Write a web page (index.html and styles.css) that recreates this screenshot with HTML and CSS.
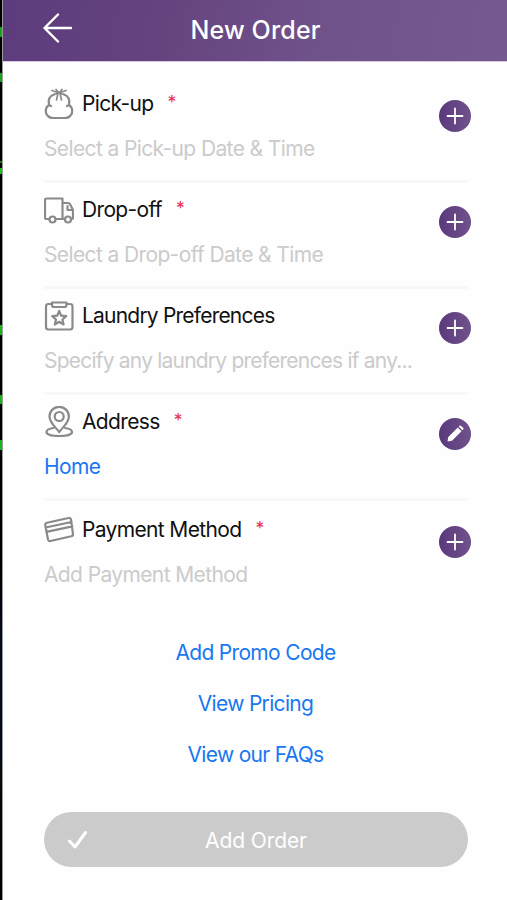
FILE: index.html
```html
<!DOCTYPE html>
<html lang="en">

<head>
    <meta charset="UTF-8">
    <meta name="viewport" content="width=device-width, initial-scale=1.0">
    <title>New Order</title>
    <link rel="stylesheet" href="styles.css">
</head>

<body>
    <div class="edge"></div>
    <div class="screen">
        <header class="header">
            <svg class="back" viewBox="0 0 30 30">
                <path d="M28 15H1.5M15 1.5L1.5 15L15 28.500" />
            </svg>
            <h1>New Order</h1>
        </header>

        <main class="content">
            <section class="row">
                <div class="info">
                    <h2>
                        <svg class="icon" viewBox="0 0 30 32">
                            <path d="M10 6.500C5.500 8 4 12 5 17C1 19.500 1 25 3.500 27.500C5 29.500 7 30 9 30H21C23 30 25 29.500 26.500 27.500C29 25 29 19.500 25 17C26 12 24.500 8 20 6.500M5 17L7 18M25 17L23 18" />
                            <path class="thin" d="M15 5L8 2.500M15 5L12 1.500M15 5L18 1.500M15 5L22 2.500M10 6.500L15 5L20 6.500M14 5L12.500 12M16 5L17.500 12" />
                        </svg>
                        <span>Pick-up</span><span class="required">*</span>
                    </h2>
                    <p>Select a Pick-up Date &amp; Time</p>
                </div>
                <button class="action"><svg viewBox="0 0 32 32"><path d="M16 8.500V23.500M8.500 16H23.500" /></svg></button>
            </section>

            <section class="row">
                <div class="info">
                    <h2>
                        <svg class="icon" viewBox="0 0 30 32">
                            <path d="M5 25H2.500Q1 25 1 23.500V6Q1 4.500 2.500 4.500H18.500V25H12M18.500 9H24Q25.500 9 26.200 10.500L29 16V23.500Q29 25 27.500 25M21 25H18.500M23.500 12V16H28" />
                            <circle cx="8.500" cy="25.500" r="3" />
                            <circle cx="24" cy="25.500" r="3" />
                        </svg>
                        <span>Drop-off</span><span class="required">*</span>
                    </h2>
                    <p>Select a Drop-off Date &amp; Time</p>
                </div>
                <button class="action"><svg viewBox="0 0 32 32"><path d="M16 8.500V23.500M8.500 16H23.500" /></svg></button>
            </section>

            <section class="row">
                <div class="info">
                    <h2 class="tight">
                        <svg class="icon" viewBox="0 0 30 32">
                            <path d="M8 4H4.500Q2 4 2 6.500V27Q2 29.500 4.500 29.500H26Q28.500 29.500 28.500 27V6.500Q28.500 4 26 4H22.500" />
                            <path d="M8 2.500H22.500V5Q22.500 7 20.500 7H10Q8 7 8 5Z" />
                            <path d="M15.200 11L17.200 15.700L22.200 16.200L18.400 19.500L19.600 24.500L15.200 21.800L10.800 24.500L12 19.500L8.200 16.200L13.200 15.700Z" />
                        </svg>
                        <span>Laundry Preferences</span>
                    </h2>
                    <p class="tight">Specify any laundry preferences if any...</p>
                </div>
                <button class="action"><svg viewBox="0 0 32 32"><path d="M16 8.500V23.500M8.500 16H23.500" /></svg></button>
            </section>

            <section class="row">
                <div class="info">
                    <h2>
                        <svg class="icon" viewBox="0 0 30 32">
                            <path d="M15.200 26C12 21.500 5.500 17 5.500 10.500A9.700 9.700 0 0 1 24.900 10.500C24.900 17 18.400 21.500 15.200 26Z" />
                            <circle cx="15.200" cy="10.500" r="4.500" />
                            <path d="M9.500 22C5.500 22.500 2.500 24 2.500 26C2.500 28.500 8 30 15.200 30S28 28.500 28 26C28 24 25 22.500 21 22" />
                        </svg>
                        <span>Address</span><span class="required">*</span>
                    </h2>
                    <p class="value">Home</p>
                </div>
                <button class="action">
                    <svg class="pencil" viewBox="0 0 32 32">
                        <path d="M8.500 23.500L9.300 19L18.800 9.500L22.500 13.200L13 22.700Z" />
                        <path d="M19.700 8.600L20.500 7.800Q21.300 7.100 22.200 7.900L24.100 9.800Q24.900 10.700 24.200 11.500L23.400 12.300Z" />
                    </svg>
                </button>
            </section>

            <section class="row last">
                <div class="info">
                    <h2>
                        <svg class="icon" viewBox="0 0 30 32">
                            <path d="M3 8.700L24.500 4Q26.500 3.500 27 5.500L29 20Q29.300 21.800 27.300 22.300L6.500 27Q4.500 27.500 4 25.500L1.200 11Q1 9.200 3 8.700ZM1.600 13.500L27.500 8M2.400 17.800L28.300 12.300" />
                        </svg>
                        <span>Payment Method</span><span class="required">*</span>
                    </h2>
                    <p>Add Payment Method</p>
                </div>
                <button class="action"><svg viewBox="0 0 32 32"><path d="M16 8.500V23.500M8.500 16H23.500" /></svg></button>
            </section>

            <nav class="links">
                <a>Add Promo Code</a>
                <a>View Pricing</a>
                <a>View our FAQs</a>
            </nav>

            <button class="submit">
                <svg viewBox="0 0 20 20"><path d="M1.500 11L7 17L17.500 2.500" /></svg>
                <span>Add Order</span>
            </button>
        </main>
    </div>
</body>

</html>
```
FILE: styles.css
```css
* {
    box-sizing: border-box;
}

body {
    margin: 0;
    display: flex;
    height: 900px;
    overflow: hidden;
    background-color: #fefefe;
    font-family: Inter, "Liberation Sans", sans-serif;
    color: #111;
}

h1,
h2,
p {
    margin: 0;
    font-weight: 400;
}

button {
    border: none;
    padding: 0;
    font-family: inherit;
}

svg {
    fill: none;
    stroke-linecap: round;
    stroke-linejoin: round;
}

/* Strip of the desktop showing beside the app */
.edge {
    width: 3px;
    border-right: 1px solid #999;
    background: linear-gradient(#000 27px, #18a51b 27px 37px, #000 37px 73px, #18a51b 73px 82px,
        #000 82px 161px, #117a13 161px 163px, #000 163px 168px, #18c51b 168px 174px,
        #000 174px 325px, #18b51b 325px 335px, #000 335px 395px, #18b51b 395px 404px,
        #000 404px 440px, #18b51b 440px 450px, #000 450px 560px, #020a20 640px 720px, #030a0c 780px, #000);
}

.screen {
    flex: 1;
}

.header {
    display: flex;
    align-items: center;
    height: 62px;
    padding: 0 40px 1px;
    background: linear-gradient(100deg, #5d3c7d, #65437f 32%, #70528b 62%, #765990);
    border-bottom: 1px solid #d9c8e4;
}

.back {
    width: 30px;
    height: 30px;
    margin-top: -5px;
    stroke: #fff;
    stroke-width: 2.4;
}

h1 {
    flex: 1;
    padding-right: 29px;
    text-align: center;
    font-size: 25px;
    font-weight: 500;
    letter-spacing: 0.15px;
    color: #fff;
}

.content {
    padding: 15px 39px 0 41px;
}

.row {
    display: flex;
    justify-content: space-between;
    align-items: center;
    height: 106px;
    border-bottom: 3px solid #f7f7f7;
}

.info {
    display: flex;
    flex-direction: column;
    gap: 17px;
    padding-bottom: 5px;
    white-space: nowrap;
}

h2 {
    display: flex;
    align-items: center;
    height: 28px;
    font-size: 21px;
    letter-spacing: -0.65px;
}

.icon {
    width: 30px;
    height: 32px;
    margin-right: 8px;
    stroke: #8a8a8a;
    stroke-width: 2.2;
}

.icon .thin {
    stroke-width: 1.7;
}

.required {
    margin: -4px 0 0 14px;
    font-size: 17.500px;
    color: #e8304f;
}

p {
    height: 28px;
    line-height: 28px;
    font-size: 21px;
    letter-spacing: -0.62px;
    color: #cbcbcb;
}

.tight {
    letter-spacing: -0.79px;
}

.value {
    color: #1878f0;
}

.action {
    width: 32px;
    height: 32px;
    margin: -26px -3px 0 0;
    border-radius: 50%;
    background: linear-gradient(90deg, #5a397c, #70528b);
}

.action svg {
    display: block;
    stroke: #fff;
    stroke-width: 1.8;
}

.action .pencil {
    fill: #fff;
    stroke: none;
}

.last {
    margin-top: 2px;
    border-bottom-color: transparent;
}

.links {
    display: flex;
    flex-direction: column;
    align-items: center;
    gap: 23px;
    margin-top: 30px;
    padding-right: 1px;
    font-size: 21px;
    line-height: 28px;
    letter-spacing: -0.68px;
    color: #1878f0;
}

.submit {
    display: flex;
    align-items: center;
    width: 424px;
    height: 55px;
    margin-top: 43px;
    padding: 1px 24px 0;
    border-radius: 28px;
    background-color: #cbcbcb;
    color: #fff;
    font-size: 21px;
}

.submit svg {
    width: 20px;
    height: 20px;
    stroke: #fff;
    stroke-width: 3;
}

.submit span {
    flex: 1;
    padding-right: 20px;
    text-align: center;
    letter-spacing: -0.1px;
}
```
